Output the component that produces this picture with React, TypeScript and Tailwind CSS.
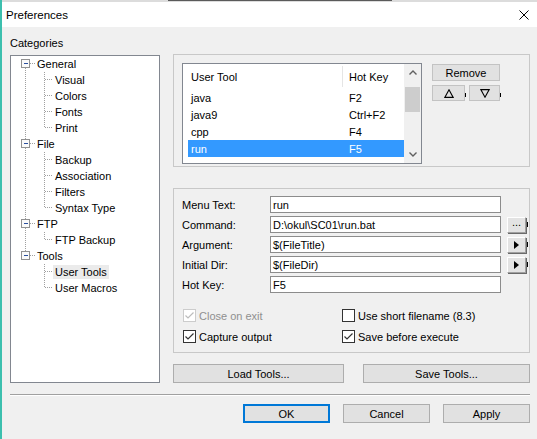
import React from "react";

const tree = [
  { label: "General", children: ["Visual", "Colors", "Fonts", "Print"] },
  { label: "File", children: ["Backup", "Association", "Filters", "Syntax Type"] },
  { label: "FTP", children: ["FTP Backup"] },
  { label: "Tools", children: ["User Tools", "User Macros"] },
];

const tools = [
  { name: "java", key: "F2" },
  { name: "java9", key: "Ctrl+F2" },
  { name: "cpp", key: "F4" },
  { name: "run", key: "F5", selected: true },
];

const fields = [
  { label: "Menu Text:", value: "run" },
  { label: "Command:", value: "D:\\okul\\SC01\\run.bat", side: "dots" },
  { label: "Argument:", value: "$(FileTitle)", side: "arrow" },
  { label: "Initial Dir:", value: "$(FileDir)", side: "arrow" },
  { label: "Hot Key:", value: "F5" },
];

const dot = { stroke: "#a0a0a0", strokeWidth: 1, strokeDasharray: "1 1", shapeRendering: "crispEdges" as const };

function RootRow({ label, first, last }: { label: string; first: boolean; last: boolean }) {
  return (
    <div className="flex h-4 items-center">
      <svg width="25" height="16" viewBox="0 0 25 16" className="shrink-0">
        {!first && <line x1="14.5" y1="0" x2="14.5" y2="3" {...dot} />}
        {!last && <line x1="14.5" y1="12" x2="14.5" y2="16" {...dot} />}
        <line x1="19" y1="7.5" x2="24" y2="7.5" {...dot} />
        <rect x="10.5" y="3.5" width="8" height="8" fill="#fafafa" stroke="#919191" shapeRendering="crispEdges" />
        <line x1="12.5" y1="7.5" x2="17" y2="7.5" stroke="#2a4f9e" shapeRendering="crispEdges" />
      </svg>
      <span className="px-[1px]">{label}</span>
    </div>
  );
}

function ChildRow({
  label,
  parentLast,
  lastChild,
  selected,
}: {
  label: string;
  parentLast: boolean;
  lastChild: boolean;
  selected?: boolean;
}) {
  return (
    <div className="flex h-4 items-center">
      <svg width="42" height="16" viewBox="0 0 42 16" className="shrink-0">
        {!parentLast && <line x1="14.5" y1="0" x2="14.5" y2="16" {...dot} />}
        <line x1="33.5" y1="0" x2="33.5" y2={lastChild ? 8 : 16} {...dot} />
        <line x1="34" y1="7.5" x2="42" y2="7.5" {...dot} />
      </svg>
      <span className={selected ? "bg-[#ebebeb] px-[2px]" : "px-[2px]"}>{label}</span>
    </div>
  );
}

function Check({ checked, disabled }: { checked: boolean; disabled?: boolean }) {
  const c = disabled ? "#bcbcbc" : "#333333";
  return (
    <span
      className={`flex h-[13px] w-[13px] shrink-0 items-center justify-center border bg-white ${
        disabled ? "border-[#cccccc]" : "border-[#333333]"
      }`}
    >
      {checked && (
        <svg width="11" height="11" viewBox="0 0 11 11">
          <polyline points="1.5,5.5 4,8 9.5,2.5" fill="none" stroke={c} strokeWidth="1.2" />
        </svg>
      )}
    </span>
  );
}

function SideButton({ kind }: { kind: string }) {
  return (
    <div className="ml-[6px] flex items-center">
      <button className="flex h-[16px] w-[19px] items-center justify-center border border-b-[#a0a0a0] border-l-white border-r-[#a0a0a0] border-t-white bg-[#e3e3e3] shadow-[1px_1px_0_#6a6a6a]">
        {kind === "dots" ? (
          <span className="mt-[-4px] text-[11px] leading-none">...</span>
        ) : (
          <svg width="5" height="8" viewBox="0 0 5 8">
            <path d="M0 0 L5 4 L0 8 Z" fill="#000" />
          </svg>
        )}
      </button>
      <span className="ml-[1px] h-[5px] w-px bg-black" />
    </div>
  );
}

function WinButton({ children, w, primary }: { children: React.ReactNode; w: string; primary?: boolean }) {
  return (
    <button
      className={`flex h-[19px] ${w} items-center justify-center border bg-[#e1e1e1] text-[11px] ${
        primary ? "border-[#0078d7] shadow-[inset_0_0_0_1px_#0078d7]" : "border-[#adadad]"
      }`}
    >
      {children}
    </button>
  );
}

export default function App() {
  return (
    <div className="relative h-[439px] w-[537px] overflow-hidden border-l-2 border-[#3cbfae] bg-[#f0f0f0] font-['Liberation_Sans',Arial,sans-serif] text-[11px] leading-[14px] text-black">
      <div className="flex h-[2px] bg-[#dcdcdc]">
        <div className="ml-[166px] h-px w-[224px] bg-[#5a5a5a]" />
      </div>
      <div className="flex h-[25px] items-center justify-between bg-white pl-[4px] pr-[8px]">
        <span className="text-[11.5px]">Preferences</span>
        <svg width="10" height="10" viewBox="0 0 10 10">
          <path d="M0.5 0.5 L9.5 9.5 M9.5 0.5 L0.5 9.5" stroke="#000" strokeWidth="1" />
        </svg>
      </div>

      <div className="pl-[8px] pr-[7px]">
        <div className="flex gap-[13px]">
          <div className="w-[150px]">
            <div className="mt-[9px] h-[14px]">Categories</div>
            <div className="mt-[5px] h-[328px] border border-[#828790] bg-white">
              {tree.map((node, i) => (
                <div key={node.label}>
                  <RootRow label={node.label} first={i === 0} last={i === tree.length - 1} />
                  {node.children.map((child, j) => (
                    <ChildRow
                      key={child}
                      label={child}
                      parentLast={i === tree.length - 1}
                      lastChild={j === node.children.length - 1}
                      selected={child === "User Tools"}
                    />
                  ))}
                </div>
              ))}
            </div>
          </div>

          <div className="w-[357px]">
            <div className="mt-[27px] flex h-[113px] border border-[#c8c8c8] pl-[8px] pt-[8px]">
              <div className="flex h-[101px] w-[240px] border border-[#828790] bg-white">
                <div className="flex-1 pl-[5px]">
                  <div className="flex h-[25px] items-center">
                    <div className="flex h-[21px] w-[155px] items-center border-r border-[#e5e5e5] pl-[3px]">
                      User Tool
                    </div>
                    <div className="pl-[6px]">Hot Key</div>
                  </div>
                  {tools.map((t) => (
                    <div
                      key={t.name}
                      className={`flex h-[17px] items-center ${t.selected ? "bg-[#3399ff] text-white" : ""}`}
                    >
                      <span className="w-[161px] pl-[3px]">{t.name}</span>
                      <span>{t.key}</span>
                    </div>
                  ))}
                </div>
                <div className="flex w-[17px] flex-col bg-[#f0f0f0]">
                  <div className="flex h-[17px] items-center justify-center">
                    <svg width="8" height="5" viewBox="0 0 8 5">
                      <polyline points="0.5,4.5 4,1 7.5,4.5" fill="none" stroke="#606060" strokeWidth="1.4" />
                    </svg>
                  </div>
                  <div className="flex-1">
                    <div className="mx-[1px] mt-[6px] h-[25px] bg-[#cdcdcd]" />
                  </div>
                  <div className="flex h-[17px] items-center justify-center">
                    <svg width="8" height="5" viewBox="0 0 8 5">
                      <polyline points="0.5,0.5 4,4 7.5,0.5" fill="none" stroke="#606060" strokeWidth="1.4" />
                    </svg>
                  </div>
                </div>
              </div>

              <div className="ml-[10px] w-[69px]">
                <button className="mt-[1px] flex h-[17px] w-[68px] items-center justify-center border border-[#c3c3c3] bg-[#e1e1e1] text-[11px]">
                  Remove
                </button>
                <div className="mt-[4px] flex items-center">
                  <button className="flex h-[16px] w-[33px] items-center justify-center border border-[#c3c3c3] bg-[#e1e1e1]">
                    <svg width="10" height="9" viewBox="0 0 10 9">
                      <path d="M5 0.8 L9.2 8.4 L0.8 8.4 Z" fill="none" stroke="#000" strokeWidth="1.1" />
                    </svg>
                  </button>
                  <span className="mt-[3px] h-[4px] w-px bg-black" />
                  <button className="ml-[3px] flex h-[16px] w-[31px] items-center justify-center border border-[#c3c3c3] bg-[#e1e1e1]">
                    <svg width="10" height="9" viewBox="0 0 10 9">
                      <path d="M0.8 0.6 L9.2 0.6 L5 8.2 Z" fill="none" stroke="#000" strokeWidth="1.1" />
                    </svg>
                  </button>
                  <span className="mt-[3px] h-[4px] w-px bg-black" />
                </div>
              </div>
            </div>

            <div className="mt-[21px] h-[165px] border border-[#c8c8c8] pl-[8px] pt-[7px]">
              {fields.map((f) => (
                <div key={f.label} className="mb-[3px] flex h-[17px] items-center">
                  <span className="w-[88px]">{f.label}</span>
                  <div className="flex h-[17px] w-[231px] items-center border border-[#8c8c8c] bg-white pl-[2px]">
                    {f.value}
                  </div>
                  {f.side && <SideButton kind={f.side} />}
                </div>
              ))}
              <div className="mt-[16px] flex flex-col gap-[8px]">
                <div className="flex h-[13px] items-center">
                  <div className="flex w-[160px] items-center gap-[3px] pl-[1px] text-[#8f8f8f]">
                    <Check checked disabled />
                    <span>Close on exit</span>
                  </div>
                  <div className="flex items-center gap-[3px]">
                    <Check checked={false} />
                    <span>Use short filename (8.3)</span>
                  </div>
                </div>
                <div className="flex h-[13px] items-center">
                  <div className="flex w-[160px] items-center gap-[3px] pl-[1px]">
                    <Check checked />
                    <span>Capture output</span>
                  </div>
                  <div className="flex items-center gap-[3px]">
                    <Check checked />
                    <span>Save before execute</span>
                  </div>
                </div>
              </div>
            </div>

            <div className="mt-[11px] flex justify-between">
              <WinButton w="w-[171px]">Load Tools...</WinButton>
              <WinButton w="w-[167px]">Save Tools...</WinButton>
            </div>
          </div>
        </div>

        <div className="mt-[11px] border-b border-t border-b-white border-t-[#a0a0a0]" />

        <div className="mt-[8px] flex justify-end gap-[13px]">
          <WinButton w="w-[87px]" primary>
            OK
          </WinButton>
          <WinButton w="w-[87px]">Cancel</WinButton>
          <WinButton w="w-[87px]">Apply</WinButton>
        </div>
      </div>
    </div>
  );
}
